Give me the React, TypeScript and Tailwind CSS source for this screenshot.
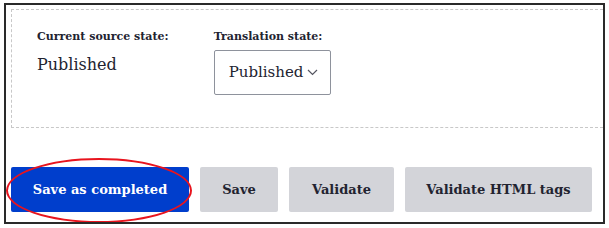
export default function App() {
  const serif = { fontFamily: '"DejaVu Serif", serif' }
  return (
    <div className="h-[228px] w-[609px] bg-white pl-1 pt-[3px]" style={serif}>
      <div className="relative h-[221px] w-[601px] overflow-hidden border-2 border-[#2a2a2a] pl-[5px] pt-1">
        <div className="flex h-[119px] gap-[45px] border border-r-0 border-dashed border-[#c8c8c8] pl-[25px] pt-[20px] text-[#222330]">
          <div className="flex flex-col">
            <span className="text-[11px] font-bold leading-[14px]">Current source state:</span>
            <span className="mt-[11px] text-[16px] leading-5">Published</span>
          </div>
          <div className="flex flex-col">
            <span className="text-[11px] font-bold leading-[14px]">Translation state:</span>
            <div className="mt-[6px] flex h-[45px] w-[117px] items-center gap-[4px] rounded-[2px] border border-[#8e929c] pl-[14px]">
              <span className="text-[15px]">Published</span>
              <svg width="11" height="7" viewBox="0 0 11 7" fill="none" stroke="#545560" strokeWidth="1.2">
                <path d="M1 1l4.5 4.5L10 1" />
              </svg>
            </div>
          </div>
        </div>
        <div className="mt-[39px] flex gap-[11px] text-[13px] font-bold">
          <button className="h-[45px] w-[178px] rounded-[2px] bg-[#003ecc] text-white">Save as completed</button>
          <button className="h-[45px] w-[78px] rounded-[2px] bg-[#d3d4d9] text-[#222330]">Save</button>
          <button className="h-[45px] w-[105px] rounded-[2px] bg-[#d3d4d9] text-[#222330]">Validate</button>
          <button className="h-[45px] w-[187px] rounded-[2px] bg-[#d3d4d9] text-[#222330]">Validate HTML tags</button>
        </div>
        <div className="absolute left-0 top-[153px] h-[65px] w-[186px] rounded-[50%] border-2 border-[#e8141e]" />
      </div>
    </div>
  )
}
